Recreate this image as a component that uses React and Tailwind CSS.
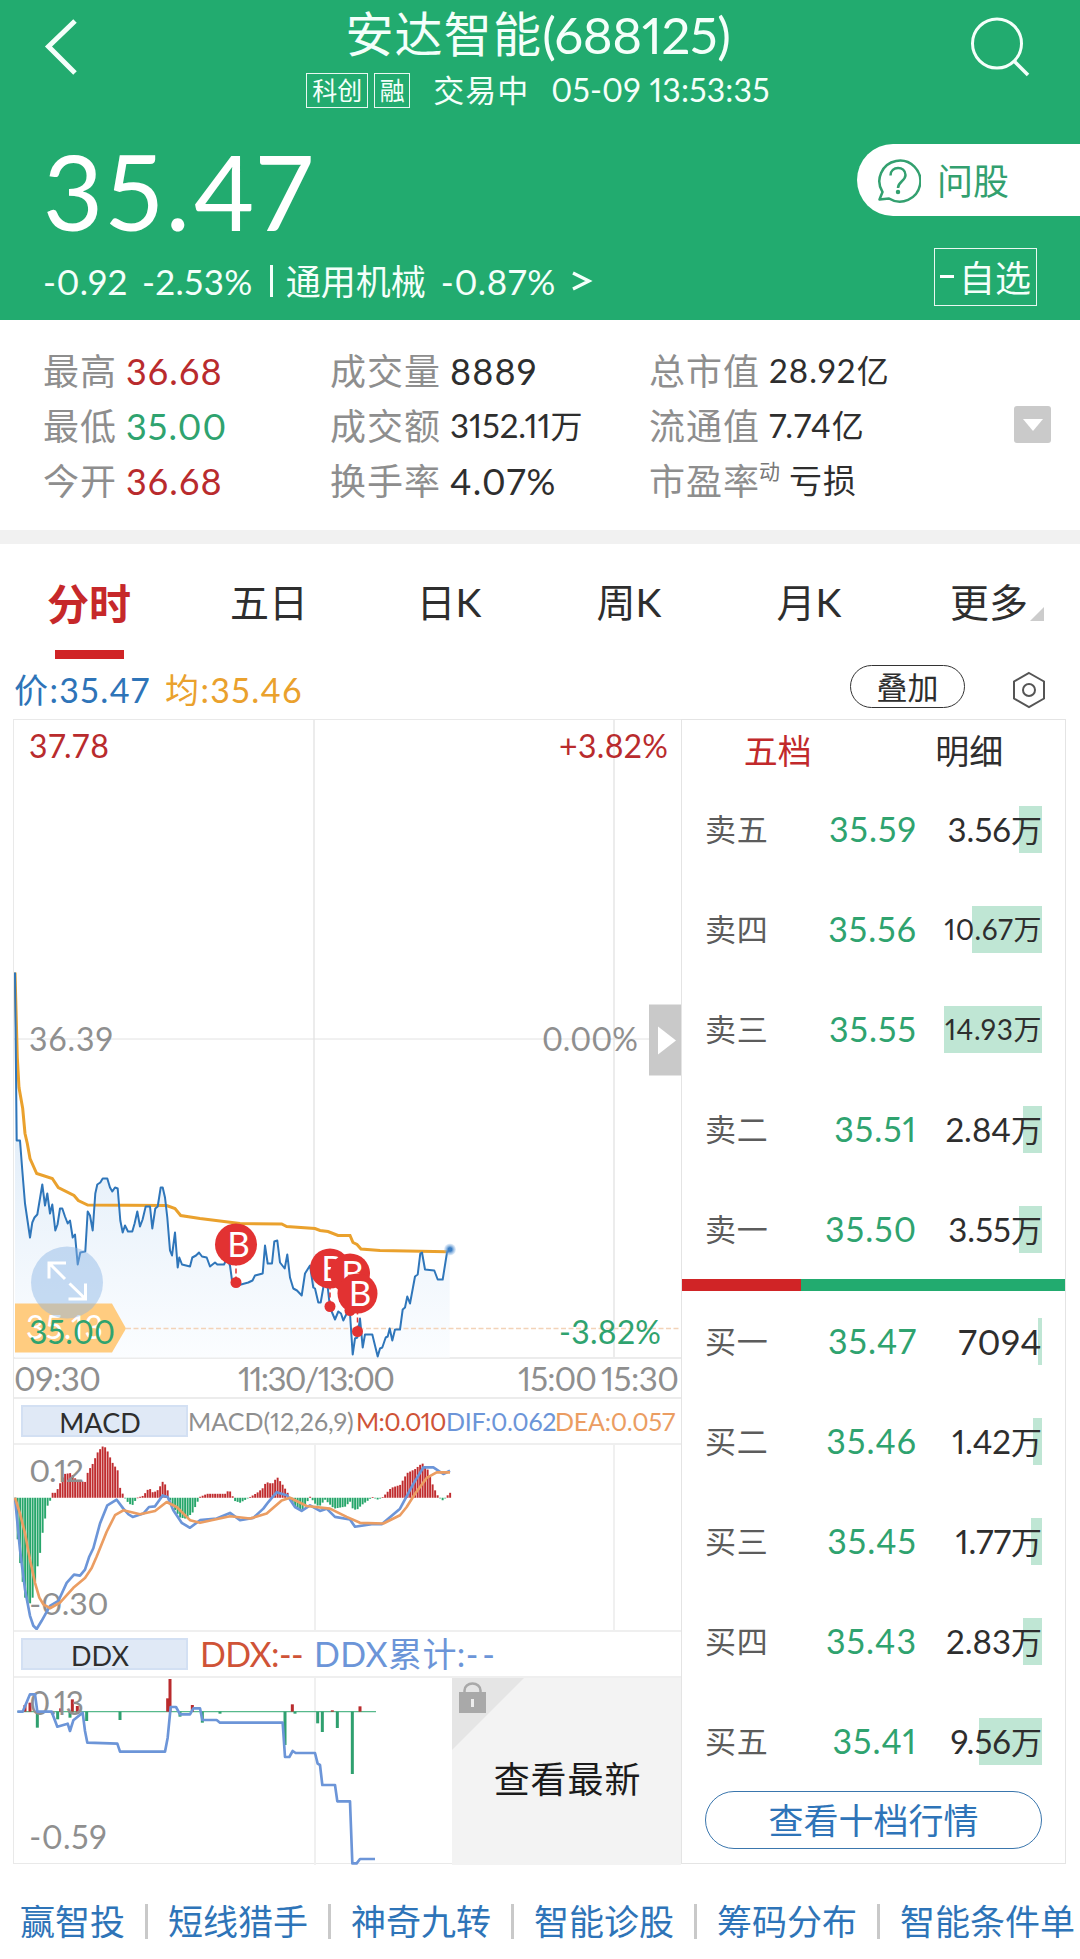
const STATS = [
  [
    { label: '最高', value: '36.68', color: 'text-[#b92b2d]' },
    { label: '最低', value: '35.00', color: 'text-[#2fa36f]' },
    { label: '今开', value: '36.68', color: 'text-[#b92b2d]' },
  ],
  [
    { label: '成交量', value: '8889' },
    { label: '成交额', value: '3152.11', unit: '万', tight: true },
    { label: '换手率', value: '4.07%' },
  ],
  [
    { label: '总市值', value: '28.92', unit: '亿', small: true },
    { label: '流通值', value: '7.74', unit: '亿', small: true },
    { label: '市盈率', sup: '动', unit: '亏损', small: true },
  ],
];

const TABS = ['分时', '五日', '日K', '周K', '月K', '更多'];

const SELLS = [
  { name: '卖五', price: '35.59', vol: '3.56', unit: '万', bar: 23 },
  { name: '卖四', price: '35.56', vol: '10.67', unit: '万', bar: 70 },
  { name: '卖三', price: '35.55', vol: '14.93', unit: '万', bar: 98 },
  { name: '卖二', price: '35.51', vol: '2.84', unit: '万', bar: 19 },
  { name: '卖一', price: '35.50', vol: '3.55', unit: '万', bar: 23 },
];

const BUYS = [
  { name: '买一', price: '35.47', vol: '7094', unit: '', bar: 4 },
  { name: '买二', price: '35.46', vol: '1.42', unit: '万', bar: 9 },
  { name: '买三', price: '35.45', vol: '1.77', unit: '万', bar: 11 },
  { name: '买四', price: '35.43', vol: '2.83', unit: '万', bar: 19 },
  { name: '买五', price: '35.41', vol: '9.56', unit: '万', bar: 63 },
];

const LINKS = ['赢智投', '短线猎手', '神奇九转', '智能诊股', '筹码分布', '智能条件单'];

const PRICE =
  '15,972 16.7,1140 20,1140 22.3,1170 25,1203 30,1237 32.3,1222 34.5,1217 37.3,1214 42.3,1184 45,1205 47.3,1193 50,1213 52.3,1204 55.3,1230 57.5,1224 60,1208 62.3,1208 65,1216 67.7,1223 70,1220 72.7,1237 75,1234 77.7,1264 80.3,1252 85.3,1251 87.7,1211 90,1215 92.7,1230 95.3,1193 97.3,1184 100.3,1182 102.7,1178 107.3,1178 110,1187 112.3,1191 115,1187 117.7,1188 120.3,1220 122.7,1232 125,1225 128,1231 132.3,1231 134.6,1223 137.3,1211 140,1226 142.6,1219 145.7,1206 150,1206 152.3,1228 155.3,1208 157.7,1206 160.7,1187 162.7,1187 165,1197 167.3,1217 170,1250 172,1255 175,1232 177.7,1267 179.3,1257 182,1264 190,1266 192.3,1257 196,1255 199,1252 202,1256 206.7,1257 210,1266 215,1262 217.3,1264 224,1264 227,1258 230,1265 232.3,1282 237.3,1285 248.3,1282 252.5,1280 255,1275 262.7,1273 265,1245 267.7,1263 272,1263 274.3,1241 277.3,1240 280,1262 284.7,1268 287.3,1254 290,1277 293.3,1288 297,1290 301.7,1295 305,1273 310,1265 313.3,1287 315,1288 318.3,1302 320.7,1302 324,1283 327.3,1283 330,1307 335,1319 338.3,1311 341,1313 343.3,1320 346.7,1313 350,1313 352.7,1354 355,1338 357.3,1337 360,1318 362.7,1347 365,1334 372.3,1334 377.7,1356 380,1348 382.3,1347 385.7,1337 387.7,1336 389.7,1328 392.3,1340 395,1329 400,1329 402.7,1309 405,1307 407.3,1296 410,1303 415,1276 417.7,1274 420.3,1253 422,1252 425,1269 434.3,1270 437.7,1279 442.7,1279 447,1252 449.7,1249';

const AVERAGE =
  '15,972 17.3,1057 19,1087 22.7,1108 25,1133 27.3,1143 30,1158 36.7,1173 52.3,1178 58.3,1187 74,1195 78.3,1200 87.7,1204.5 166.7,1205 175,1208 180.7,1215 200,1218 240,1223 281.7,1223.5 286.7,1226 315,1228 320,1230 328,1231 338,1235 350,1235 353,1242 357,1244 361,1248.5 380,1250 447,1251.3';

// x centre, circle y, dot y
const TRADES = [
  { x: 236, y: 1244, dot: 1282, r: 21 },
  { x: 330, y: 1268, dot: 1306, r: 20 },
  { x: 350, y: 1273, dot: 1310, r: 20 },
  { x: 357.5, y: 1293, dot: 1331, r: 20 },
];

// key heights of the MACD histogram, filled in between every 2.5px
const HIST = [
  [15, 0], [17.5, -42], [20, -66], [22.5, -85], [25, -101], [29, -109], [32.5, -101], [37, -72], [40.5, -53], [43, -31],
  [45, -21], [47.5, -8], [50, -3], [52.5, 5], [56, 5], [58, 10], [64, 24], [71, 25], [77, 17], [85, 16], [88, 27], [92, 33],
  [98, 47], [102.7, 52], [105, 51], [107, 48], [112, 36], [118, 27], [120, 10], [123, 3], [125, 0], [128, -5], [132, -8],
  [137, 0], [143, 2], [149, 10], [153, 5], [158, 8], [163, 17], [167, 10], [169, 0], [172, -8], [180, -20], [185, -21],
  [192, -16], [197, -5], [200, 1], [207, 4], [225, 4], [229, 8], [232, 3], [234, -3], [240, -5], [247, -1], [257, 5],
  [263, 10], [266, 16], [272, 14], [277, 21], [282, 14], [287, 6], [290, 0], [294, -8], [302, -13], [310, 1], [315, -6],
  [319, -9], [325, -2], [334, -11], [345, -9], [350, -4], [353, -12], [357, -12], [362, -7], [369, -2], [372, 1],
  [378, -2], [383, 1], [391, 10], [400, 13], [407, 25], [415, 29], [422, 35], [427, 30], [433, 12], [437, 3], [440, 0],
  [443, -3], [447, 2], [450, 5],
];

const DIF =
  '45,322 60,480 75,600 90,680 100,710 110,720 125,695 150,650 175,635 200,580 222,555 240,558 255,540 268,500 280,475 300,400 322,345 350,328 370,355 385,372 398,380 430,370 447,350 465,348 488,315 503,320 520,360 545,398 570,413 600,390 650,385 690,368 720,390 760,383 790,355 805,335 830,305 862,315 885,350 905,362 930,345 960,362 980,355 1005,380 1050,388 1065,410 1115,402 1145,402 1200,355 1240,280 1270,230 1300,230 1330,250 1350,240';
const DEA =
  '45,322 60,370 75,430 90,510 105,580 118,625 130,645 150,657 180,640 220,595 255,565 275,535 290,500 320,425 345,375 370,360 420,372 465,362 500,335 530,350 570,390 600,398 690,378 750,385 800,370 845,330 870,322 920,347 990,355 1040,380 1080,398 1150,400 1200,375 1220,350 1245,310 1280,262 1310,245 1350,245';

const DDX_LINE =
  '52,242 68,242 90,190 105,190 112,242 155,242 172,287 203,278 210,300 220,268 248,245 255,300 262,335 352,338 360,362 495,362 503,320 512,228 528,228 540,250 570,250 580,232 600,232 607,267 650,267 660,275 848,275 855,378 868,378 878,360 887,366 945,366 953,398 960,402 967,462 1005,462 1012,511 1050,511 1057,697 1070,697 1080,684 1125,684';
const DDX_BARS = [
  [75, 222], [90, 215], [112, 290], [173, 265], [182, 232], [210, 260], [217, 205], [232, 225], [260, 270], [360, 267],
  [503, 202], [510, 144], [540, 257], [577, 222], [607, 275], [660, 248], [855, 342], [877, 220], [885, 248], [953, 277],
  [967, 303], [997, 238], [1012, 291], [1057, 429], [1080, 226],
];

function histBars() {
  const bars = [];
  let k = 0;
  for (let x = 15; x <= 450; x += 2.5) {
    while (k < HIST.length - 2 && HIST[k + 1][0] < x) k++;
    const [x0, h0] = HIST[k];
    const [x1, h1] = HIST[k + 1];
    bars.push({ x, h: h0 + ((h1 - h0) * (x - x0)) / (x1 - x0) });
  }
  return bars;
}

function Label({ x, y, w, children, fill = '#8f8f8f', size = 32 }) {
  return (
    <text x={x} y={y} fontSize={size} fill={fill} textLength={w} lengthAdjust="spacing">
      {children}
    </text>
  );
}

function Header() {
  return (
    <header className="h-[320px] bg-[#22ab6f] text-[#f4fffa]">
      <div className="flex h-[116px] justify-between">
        <svg className="ml-[42px] mt-[16px] h-[60px] w-[40px]" viewBox="42 16 40 60" fill="none" stroke="currentColor" strokeWidth="5">
          <path d="M75 21 L48.500 46.500 L75 73" />
        </svg>
        <div className="ml-[24px] flex flex-col items-center">
          <h1 className="flex h-[68px] items-center whitespace-nowrap text-[48px] leading-none tracking-[1.2px]">
            安达智能<span className="text-[51px] tracking-[-0.4px]">(688125)</span>
          </h1>
          <div className="flex h-[44px] items-center whitespace-nowrap text-[31px] leading-none">
            <span className="flex h-[35px] w-[62px] items-center justify-center border border-white/90 text-[25px]">科创</span>
            <span className="ml-[6px] flex h-[35px] w-[36px] items-center justify-center border border-white/90 text-[25px]">融</span>
            <span className="ml-[23px] tracking-[1px]">交易中</span>
            <span className="ml-[22px] text-[32px] tracking-[0.2px]">05-09 13:53:35</span>
          </div>
        </div>
        <svg className="mr-[48px] mt-[14px] h-[66px] w-[62px]" viewBox="970 14 62 66" fill="none" stroke="currentColor" strokeWidth="3">
          <circle cx="997" cy="43.500" r="24.500" />
          <path d="M1014 61 L1028 75" strokeWidth="3.500" />
        </svg>
      </div>
      <div className="flex h-[127px] justify-between">
        <div className="ml-[43px] mt-[19px] text-[104px] leading-[112px] tracking-[3px] text-white">35.47</div>
        <div className="mt-[28px] flex h-[72px] w-[223px] items-center rounded-l-full bg-white pl-[18px] text-[#33a06f]">
          <svg className="h-[48px] w-[46px]" viewBox="0 0 46 48" fill="none" stroke="currentColor" strokeWidth="2.500">
            <path d="M7.500 36 A20.500 20.500 0 1 1 14 42.500 L4.500 43.500 Z" strokeLinejoin="round" />
            <path d="M15.500 19.500 C15.500 9.500 30.500 9.500 30.500 19 C30.500 25 23 25.500 23 32" />
            <circle cx="23" cy="36" r="1.200" fill="currentColor" stroke="none" />
            <circle cx="23" cy="36" r="1" />
          </svg>
          <span className="ml-[16px] pt-[2px] text-[36px] leading-none">问股</span>
        </div>
      </div>
      <div className="flex h-[77px] justify-between">
        <div className="ml-[43px] mt-[15px] flex h-[46px] items-center text-[35px] leading-none">
          <span className="tracking-[0.5px]">-0.92</span>
          <span className="ml-[14px] tracking-[0.4px]">-2.53%</span>
          <span className="ml-[17px] h-[32px] w-[3px] bg-[#f4fffa]" />
          <span className="ml-[13px] text-[35px]">通用机械</span>
          <span className="ml-[15px] tracking-[0.7px]">-0.87%</span>
          <svg className="ml-[15px] h-[24px] w-[22px]" viewBox="0 0 22 24" fill="none" stroke="currentColor" strokeWidth="3.200">
            <path d="M2 4 L18 12 L2 20" />
          </svg>
        </div>
        <div className="mr-[43px] mt-[5px] flex h-[58px] w-[103px] items-center justify-center border border-white/90 pt-[2px] text-[36px] leading-none">
          <span className="mr-[5px] mb-[3px] h-[3px] w-[14px] bg-white" />自选
        </div>
      </div>
    </header>
  );
}

function StatRow({ s }) {
  return (
    <div className="flex h-[55px] items-center whitespace-nowrap leading-none">
      <span className="text-[36px] tracking-[1px] text-[#8e8e8e]">{s.label}</span>
      {s.sup && <sup className="-ml-px self-start pt-[17px] text-[21px] leading-none text-[#777]">{s.sup}</sup>}
      <span className={`ml-[9px] ${s.color || 'text-[#2e2e2e]'} ${s.small || s.tight ? 'text-[33px]' : 'text-[36px]'} ${s.tight ? 'tracking-[-0.1px]' : 'tracking-[1.1px]'}`}>
        {s.value}
        <span className={s.unit === '亏损' ? 'text-[33px]' : 'text-[32px]'}>{s.unit}</span>
      </span>
    </div>
  );
}

function Stats() {
  return (
    <section className="flex h-[224px] border-b-[14px] border-[#f1f1f1] pl-[43px] pt-[23px]">
      {STATS.map((col, i) => (
        <div key={i} className={i === 0 ? 'w-[287px]' : i === 1 ? 'w-[319px]' : 'w-[365px]'}>
          {col.map((s) => <StatRow key={s.label} s={s} />)}
        </div>
      ))}
      <div className="mt-[63px] flex h-[37px] w-[37px] items-center justify-center rounded-[3px] bg-[#cacaca]">
        <svg width="20" height="12" viewBox="0 0 20 12" fill="#fff"><path d="M0 0H20L10 12Z" /></svg>
      </div>
    </section>
  );
}

function Tabs() {
  return (
    <nav className="-ml-px flex h-[115px]">
      {TABS.map((t, i) => (
        <div key={t} className="flex w-[180px] flex-col items-center leading-none">
          <div className={`flex h-[106px] items-center ${i === 0 ? 'pt-[13px] text-[42px] font-bold text-[#c6282a]' : 'pt-[11px] text-[39px] text-[#2e2e2e]'}`}>
            {t}
            {i === 5 && (
              <svg className="-mr-[16px] ml-[2px] mt-[22px] h-[14px] w-[14px]" viewBox="0 0 14 14" fill="#ccc"><path d="M14 0V14H0Z" /></svg>
            )}
          </div>
          {i === 0 && <div className="h-[9px] w-[69px] bg-[#d02426]" />}
        </div>
      ))}
    </nav>
  );
}

function Legend() {
  return (
    <div className="flex h-[60px] items-center pl-[14px] text-[34px] leading-none">
      <span className="w-[151px] pt-[2px] tracking-[1.4px] text-[#2e74b8]">价:35.47</span>
      <span className="pt-[2px] tracking-[1.4px] text-[#eaa12d]">均:35.46</span>
      <span className="ml-auto mb-[6px] flex h-[43px] w-[115px] items-center justify-center rounded-full border-[1.5px] border-[#333] pt-[2px] text-[31px] text-[#2e2e2e]">叠加</span>
      <svg className="ml-[47px] mr-[34px] mt-px h-[38px] w-[34px]" viewBox="-17 -19 34 38" fill="none" stroke="#555" strokeWidth="2">
        <path d="M0 -17 L15 -8.500 V8.500 L0 17 L-15 8.500 V-8.500 Z" />
        <circle r="6" />
      </svg>
    </div>
  );
}

function TrendChart() {
  return (
    <svg className="block h-[679px] w-[667px]" viewBox="14 719.5 667 679">
      <defs>
        <linearGradient id="area" x1="0" y1="0" x2="0" y2="1">
          <stop offset="0" stopColor="#d9e7f6" />
          <stop offset="0.4" stopColor="#e3eef9" />
          <stop offset="1" stopColor="#fbfdff" />
        </linearGradient>
        <radialGradient id="glow">
          <stop offset="0.3" stopColor="#3d7fc4" />
          <stop offset="1" stopColor="#8fb9e6" stopOpacity="0.200" />
        </radialGradient>
      </defs>
      <g stroke="#ececec" strokeWidth="2">
        <path d="M314 719V1358M614 719V1358M14 1357.500H681M14 1397.500H681" />
        <path d="M14 1038.500H681" strokeWidth="1" stroke="#e2e2e2" />
      </g>
      <polygon points={`15,1357 ${PRICE} 449.7,1357`} fill="url(#area)" />
      <path d="M126 1328H680" stroke="#f3d3b8" strokeWidth="1.500" strokeDasharray="5 2.500" />
      <polyline points={AVERAGE} fill="none" stroke="#eaa12d" strokeWidth="3" />
      <polyline points={PRICE} fill="none" stroke="#2f76ba" strokeWidth="2" strokeLinejoin="round" />
      <circle cx="450" cy="1249" r="6" fill="url(#glow)" />

      {TRADES.map((t) => (
        <g key={t.x}>
          <path d={`M${t.x} ${t.y}V${t.dot}`} stroke="#e23232" strokeWidth="1.500" strokeDasharray="5 3" />
          <circle cx={t.x} cy={t.dot} r="5.500" fill="#e23232" />
          <circle cx={t.x} cy={t.y} r={t.r} fill="#e23232" />
          <text x={t.x + 2.5} y={t.y + 12.5} fontSize="35" fill="#fff" textAnchor="middle">B</text>
        </g>
      ))}

      <path d="M15 1303H112L126 1328L112 1352H15Z" fill="#ffcc80" />
      <text x="26" y="1338" fontSize="32" fill="#fff" textLength="77">35.13</text>
      <circle cx="67" cy="1282" r="36" fill="#8ab4e4" fillOpacity="0.450" />
      <g stroke="#fff" strokeWidth="3" fill="none">
        <path d="M49 1278V1262.500H66M50 1263.500L65 1278.500" />
        <path d="M85.500 1283V1298.500H68.500M84.500 1297.500L69.500 1283" />
      </g>

      <Label x={29} y={757} w={80} fill="#b92b2d">37.78</Label>
      <Label x={559} y={757} w={109} fill="#b92b2d">+3.82%</Label>
      <Label x={29} y={1050} w={84}>36.39</Label>
      <Label x={542} y={1050} w={96}>0.00%</Label>
      <Label x={29} y={1343} w={86} fill="#2fa36f">35.00</Label>
      <Label x={559} y={1343} w={102} fill="#2fa36f">-3.82%</Label>
      <Label x={14} y={1390} w={87} size={33}>09:30</Label>
      <Label x={238} y={1390} w={157} size={33}>11:30/13:00</Label>
      <Label x={518} y={1390} w={79} size={33}>15:00</Label>
      <Label x={601} y={1390} w={78} size={33}>15:30</Label>

      <rect x="649" y="1004" width="32" height="71" fill="#c9c9c9" />
      <path d="M658 1026L676 1040L658 1054Z" fill="#fff" />
    </svg>
  );
}

function IndicatorBar({ name, children }) {
  return (
    <div className="flex h-[46px] items-center border-b-2 border-[#efefef] pl-[7px] leading-none">
      <div className="flex h-[32px] w-[167px] items-center justify-center border-2 border-[#d3e0f3] bg-[#e0e9f6] pr-[9px] pt-[2px] text-[27px] text-[#2e2e2e]">
        {name}
      </div>
      {children}
    </div>
  );
}

function MacdChart() {
  return (
    <svg className="block h-[187px] w-[667px] border-b-2 border-[#efefef]" viewBox="42 162 2001 561" preserveAspectRatio="none">
      <path d="M945 162V723M1842 162V723" stroke="#f0f0f0" strokeWidth="6" />
      {histBars().map((b) => (
        <rect
          key={b.x}
          x={b.x * 3 - 2.5}
          y={b.h > 0 ? 322 - b.h * 3 : 322}
          width="5.800"
          height={Math.max(Math.abs(b.h) * 3, 2)}
          fill={b.h > 0 ? '#c02c2f' : '#27a66b'}
        />
      ))}
      <Label x={88} y={275} w={164} size={96}>0.12</Label>
      <Label x={88} y={677} w={238} size={96}>-0.30</Label>
      <polyline points={DIF} fill="none" stroke="#6c95d8" strokeWidth="8" strokeLinejoin="round" />
      <polyline points={DEA} fill="none" stroke="#eb9d62" strokeWidth="8" strokeLinejoin="round" />
    </svg>
  );
}

function DdxChart() {
  return (
    <div className="flex h-[187px]">
      <svg className="block h-[187px] w-[438px]" viewBox="42 141 1314 561">
        <path d="M945 141V702" stroke="#f0f0f0" strokeWidth="6" />
        <path d="M52 242H1128" stroke="#57b98c" strokeWidth="4" />
        {DDX_BARS.map(([x, y]) => (
          <rect key={x} x={x - 4.5} y={Math.min(y, 242)} width="9" height={Math.abs(y - 242)} fill={y < 242 ? '#b92b2d' : '#2fa06f'} />
        ))}
        <Label x={88} y={252} w={164} size={96}>0.13</Label>
        <Label x={88} y={655} w={232} size={96}>-0.59</Label>
        <polyline points={DDX_LINE} fill="none" stroke="#6c95d8" strokeWidth="8" strokeLinejoin="round" />
      </svg>
      <div className="relative flex flex-1 items-center justify-center bg-[#f3f3f3] pl-[2px] pt-[14px] text-[36px] leading-none tracking-[0.9px] text-[#1b1b1b]">
        <svg className="absolute left-0 top-0 h-[72px] w-[72px]" viewBox="0 0 72 72">
          <path d="M0 0H72L0 72Z" fill="#e5e5e5" />
          <path d="M12.500 15V12.500a8 7 0 0 1 16 0V15" fill="none" stroke="#a9a9a9" strokeWidth="2.500" />
          <rect x="7" y="14" width="27" height="21" fill="#a9a9a9" />
          <rect x="19" y="21" width="3" height="8" fill="#eee" />
        </svg>
        查看最新
      </div>
    </div>
  );
}

function BookRow({ row }) {
  const long = row.vol.length > 4;
  const size = long ? 'text-[28px] tracking-[0.6px]' : row.unit ? 'text-[33px]' : 'text-[35px] tracking-[0.6px]';
  return (
    <div className="flex h-[100px] items-center pl-[23px] pr-[23px] leading-none">
      <span className="w-[64px] text-[31px] tracking-[0.7px] text-[#5c5c5c]">{row.name}</span>
      <span className="w-[148px] text-right text-[34px] tracking-[1px] text-[#2fa36f]">{row.price}</span>
      <div className="relative flex h-[47px] flex-1 items-center justify-end">
        <div className="absolute right-0 top-0 h-[47px] bg-[#bfe6d4]" style={{ width: row.bar }} />
        <span className={`relative whitespace-nowrap text-[#2e2e2e] ${size}`}>
          {row.vol}
          <span className={long ? 'text-[28px]' : 'text-[31px]'}>{row.unit}</span>
        </span>
      </div>
    </div>
  );
}

function OrderBook() {
  return (
    <aside className="flex h-[1145px] w-[385px] shrink-0 flex-col border border-[#e4e4e4]">
      <div className="flex h-[59px] pt-[13px] text-[34px] leading-[36px]">
        <span className="w-1/2 text-center text-[#c1292b]">五档</span>
        <span className="w-1/2 text-center text-[#2e2e2e]">明细</span>
      </div>
      <div>{SELLS.map((r) => <BookRow key={r.name} row={r} />)}</div>
      <div className="flex h-[12px]">
        <div className="w-[119px] bg-[#d02426]" />
        <div className="flex-1 bg-[#22ab6f]" />
      </div>
      <div>{BUYS.map((r) => <BookRow key={r.name} row={r} />)}</div>
      <button className="mx-[23px] flex h-[58px] shrink-0 items-center justify-center rounded-full border-[1.5px] border-[#3a76ad] pt-px text-[35px] leading-none text-[#2e74b8]">
        查看十档行情
      </button>
    </aside>
  );
}

export default function App() {
  return (
    <div className="flex h-[1959px] w-[1080px] flex-col overflow-hidden bg-white font-[Lato,'Noto_Sans_CJK_SC',sans-serif] proportional-nums">
      <Header />
      <Stats />
      <Tabs />
      <Legend />
      <main className="flex h-[1145px] pl-[13px]">
        <div className="w-[668px] shrink-0 border-y border-l border-[#e9e9e9]">
          <TrendChart />
          <IndicatorBar name="MACD">
            <div className="flex text-[25px]">
              <span className="w-[168px] text-[#8f8f8f]">MACD(12,26,9)</span>
              <span className="w-[90px] tracking-[-0.6px] text-[#cf5337]">M:0.010</span>
              <span className="w-[109px] tracking-[-0.3px] text-[#6c95d8]">DIF:0.062</span>
              <span className="tracking-[-0.2px] text-[#eb9d62]">DEA:0.057</span>
            </div>
          </IndicatorBar>
          <MacdChart />
          <IndicatorBar name="DDX">
            <div className="flex pl-[12px] text-[34px]">
              <span className="w-[114px] tracking-[-0.6px] text-[#cf5337]">DDX:--</span>
              <span className="tracking-[0.4px] text-[#6c95d8]">DDX累计:<span className="tracking-[4px]">--</span></span>
            </div>
          </IndicatorBar>
          <DdxChart />
        </div>
        <OrderBook />
      </main>
      <footer className="flex flex-1 items-center pl-[20px] pt-[19px] text-[35px] leading-none text-[#2e74b8]">
        {LINKS.map((l, i) => (
          <div key={l} className="flex shrink-0 items-center whitespace-nowrap">
            {i > 0 && <span className="ml-[20px] mr-[20px] h-[35px] w-[3px] bg-[#c9c9c9]" />}
            {l}
          </div>
        ))}
      </footer>
    </div>
  );
}
